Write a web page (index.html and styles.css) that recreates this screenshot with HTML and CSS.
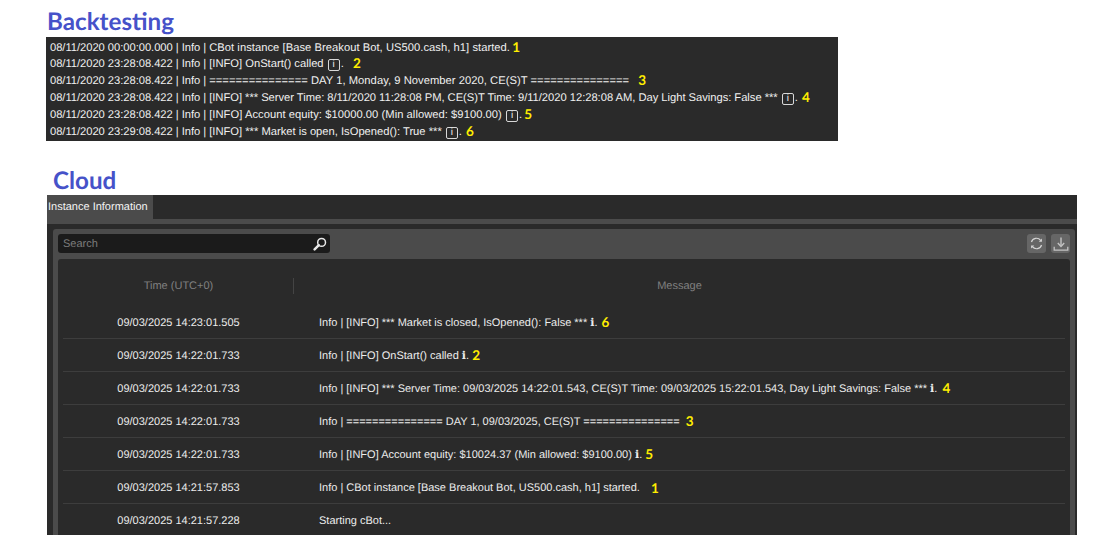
FILE: index.html
```html
<!DOCTYPE html>
<html lang="en">
<head>
<meta charset="utf-8">
<title>Backtesting and Cloud logs</title>
<link rel="stylesheet" href="styles.css">
</head>
<body>
<h1 class="title title-back">Backtesting</h1>
<section class="log">
  <div class="log-line"><span class="pfx">08/11/2020 00:00:00.000 | Info | </span><span class="wide">CBot instance [Base Breakout Bot, US500.cash, h1] started. </span><b class="num n-1">1</b></div>
  <div class="log-line"><span class="pfx">08/11/2020 23:28:08.422 | Info | </span>[INFO] OnStart() called <span class="info-box">i</span>. <b class="num n6">2</b></div>
  <div class="log-line"><span class="pfx">08/11/2020 23:28:08.422 | Info | </span><span class="wide">=============== DAY 1, Monday, 9 November 2020, CE(S)T =============== </span><b class="num n6">3</b></div>
  <div class="log-line"><span class="pfx">08/11/2020 23:28:08.422 | Info | </span><span class="tight">[INFO] *** Server Time: 8/11/2020 11:28:08 PM, CE(S)T Time: 9/11/2020 12:28:08 AM, Day Light Savings: False *** </span><span class="info-box">i</span>. <b class="num n1">4</b></div>
  <div class="log-line"><span class="pfx">08/11/2020 23:28:08.422 | Info | </span><span class="wide">[INFO] Account equity: $10000.00 (Min allowed: $9100.00) </span><span class="info-box">i</span>. <b class="num n-1">5</b></div>
  <div class="log-line"><span class="pfx">08/11/2020 23:29:08.422 | Info | </span>[INFO] *** Market is open, IsOpened(): True *** <span class="info-box">i</span>. <b class="num n1">6</b></div>
</section>
<h1 class="title title-cloud">Cloud</h1>
<section class="app">
  <div class="tabs"><div class="tab">Instance Information</div></div>
  <div class="strip"></div>
  <div class="panel">
    <div class="toolbar">
      <div class="search">
        <span>Search</span>
        <svg class="search-icon" viewBox="0 0 14 14" width="14" height="14"><circle cx="8.6" cy="5.4" r="3.9" fill="none" stroke="#e8e8e8" stroke-width="1.5"/><path d="M5.8 8.2 1.6 12.4" stroke="#e8e8e8" stroke-width="2.4" stroke-linecap="round"/></svg>
      </div>
      <div class="buttons">
        <button class="tool" type="button" aria-label="Refresh"><svg viewBox="0 0 16 16" width="15" height="15"><path d="M2.6 6.4A5.6 5.6 0 0 1 12.4 4.6M13.4 9.6A5.6 5.6 0 0 1 3.6 11.4" fill="none" stroke="#d4d4d4" stroke-width="1.3"/><path d="M13.8 2.6v3.4h-3.4zM2.2 13.4V10h3.4z" fill="#d4d4d4"/></svg></button>
        <button class="tool" type="button" aria-label="Download"><svg viewBox="0 0 16 16" width="16" height="16"><path d="M8 1.5v8" stroke="#c4c4c4" stroke-width="1.4"/><path d="M4.8 7 8 10.4 11.2 7" fill="none" stroke="#c4c4c4" stroke-width="1.4"/><path d="M1.2 10.8v3.4h13.6v-3.4" fill="none" stroke="#c4c4c4" stroke-width="1.3"/></svg></button>
      </div>
    </div>
    <div class="table">
      <div class="head">
        <div class="col-time">Time (UTC+0)</div>
        <div class="col-msg">Message</div>
      </div>
      <div class="row"><div class="cell-time">09/03/2025 14:23:01.505</div><div class="cell-msg">Info | [INFO] *** Market is closed, IsOpened(): False *** <span class="info-glyph">ℹ</span>. <b class="num n1">6</b></div></div>
      <div class="row"><div class="cell-time">09/03/2025 14:22:01.733</div><div class="cell-msg">Info | [INFO] OnStart() called <span class="info-glyph">ℹ</span>. <b class="num">2</b></div></div>
      <div class="row"><div class="cell-time">09/03/2025 14:22:01.733</div><div class="cell-msg">Info | [INFO] *** Server Time: 09/03/2025 14:22:01.543, CE(S)T Time: 09/03/2025 15:22:01.543, Day Light Savings: False *** <span class="info-glyph">ℹ</span>. <b class="num n2">4</b></div></div>
      <div class="row"><div class="cell-time">09/03/2025 14:22:01.733</div><div class="cell-msg">Info | =============== DAY 1, 09/03/2025, CE(S)T =============== <b class="num n3">3</b></div></div>
      <div class="row"><div class="cell-time">09/03/2025 14:22:01.733</div><div class="cell-msg">Info | [INFO] Account equity: $10024.37 (Min allowed: $9100.00) <span class="info-glyph">ℹ</span>. <b class="num">5</b></div></div>
      <div class="row"><div class="cell-time">09/03/2025 14:21:57.853</div><div class="cell-msg">Info | CBot instance [Base Breakout Bot, US500.cash, h1] started. <b class="num n8">1</b></div></div>
      <div class="row row-last"><div class="cell-time">09/03/2025 14:21:57.228</div><div class="cell-msg">Starting cBot...</div></div>
    </div>
  </div>
</section>
</body>
</html>
```
FILE: styles.css
```css
* { box-sizing: border-box; }
html, body { margin: 0; padding: 0; background: #fff; }
body { width: 1095px; height: 560px; overflow: hidden; font-family: "Liberation Sans", Arial, sans-serif; text-rendering: geometricPrecision; }

.title { margin: 0; font-family: Lato, "Open Sans", sans-serif; font-weight: 700; font-size: 24.2px; line-height: 30px; color: #4652c9; }
.title-back { padding: 7px 0 0 47px; }
.title-cloud { padding: 0 0 0 53px; margin-top: 25px; line-height: 29px; }

.log { margin-left: 46px; width: 792px; height: 104px; padding: 2.6px 0 0 4px; background: #2a2a2a; color: #f0f0f0; font-size: 11.2px; }
.log-line { height: 16.85px; line-height: 17px; white-space: nowrap; }
.pfx { letter-spacing: -0.04px; }
.wide { letter-spacing: 0.04px; }
.tight { letter-spacing: -0.025px; }

.num { color: #ffee00; font-family: Lato, sans-serif; font-weight: 700; font-size: 13.5px; line-height: 1; vertical-align: -1px; }
.n-1 { margin-left: -1px; }
.n1 { margin-left: 1px; }
.n2 { margin-left: 2px; }
.n3 { margin-left: 3px; }
.n6 { margin-left: 6px; }
.n8 { margin-left: 8px; vertical-align: -2px; }

.info-box { display: inline-block; width: 12px; height: 12px; margin: 0 1px; border: 1px solid #d8d8d8; border-radius: 2px; font-size: 10px; line-height: 10px; text-align: center; vertical-align: 0; }
.info-glyph { font-family: "DejaVu Sans", sans-serif; font-weight: 400; line-height: 1; }

.app { margin-left: 47px; width: 1030px; height: 340px; background: #2a2a2a; overflow: hidden; }
.tabs { height: 24px; }
.tab { width: 106px; height: 24px; padding-left: 1px; background: #4b4b4b; color: #f4f4f4; font-size: 11px; line-height: 24px; white-space: nowrap; }
.strip { height: 5px; background: #4b4b4b; }
.panel { margin: 5px 2px 0 6px; height: 306px; padding: 5px 5px 0; background: #4b4b4b; border-radius: 3px 3px 0 0; }

.toolbar { display: flex; justify-content: space-between; align-items: center; height: 19px; }
.search { display: flex; align-items: center; justify-content: space-between; width: 272px; height: 19px; padding: 0 3px 0 5px; background: #1b1b1b; border-radius: 3px; color: #7b7b7b; font-size: 11px; }
.search-icon { display: block; }
.buttons { display: flex; gap: 5px; }
.tool { display: flex; align-items: center; justify-content: center; width: 19px; height: 19px; padding: 0; border: 0; border-radius: 3px; background: #666; }

.table { margin-top: 6px; height: 281px; padding: 0 5px; background: #2a2a2a; border-radius: 3px 3px 0 0; color: #ececec; font-size: 11px; }
.head { display: flex; align-items: center; height: 47.4px; padding-top: 7px; color: #808080; }
.col-time { width: 231px; padding-left: 1px; text-align: center; border-right: 1px solid #444; line-height: 16px; }
.col-msg { flex: 1; text-align: center; }
.row { display: flex; height: 33px; line-height: 34px; border-bottom: 1px solid #3d3d3d; white-space: nowrap; }
.row-last { border-bottom: 0; }
.cell-time { width: 231px; text-align: center; }
.cell-msg { padding-left: 25px; }
```
